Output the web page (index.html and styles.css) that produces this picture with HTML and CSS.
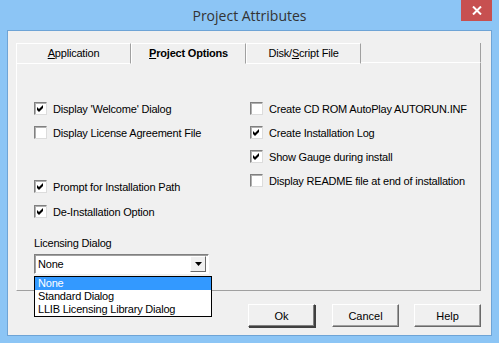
FILE: index.html
```html
<!DOCTYPE html>
<html lang="en">
<head>
    <meta charset="UTF-8">
    <title>Project Attributes</title>
    <link rel="stylesheet" href="styles.css">
</head>
<body>
    <div class="window">
        <div class="titlebar">
            <span></span>
            <div class="title">Project Attributes</div>
            <div class="close">
                <svg width="10" height="9" viewBox="0 0 10 9"><path d="M1 0.5 L9 8.5 M9 0.5 L1 8.5" stroke="#fff" stroke-width="2"/></svg>
            </div>
        </div>

        <div class="client">
            <!-- tabs -->
            <div class="tabs">
                <div class="tab"><u>A</u>pplication</div>
                <div class="tab active"><u>P</u>roject Options</div>
                <div class="tab">Disk/<u>S</u>cript File</div>
                <div class="tab-rest"></div>
            </div>

            <div class="panel">
                <div class="col col-left">
                    <label class="check checked"><span class="box"></span>Display 'Welcome' Dialog</label>
                    <label class="check"><span class="box"></span>Display License Agreement File</label>
                    <label class="check checked spaced"><span class="box"></span>Prompt for Installation Path</label>
                    <label class="check checked close-row"><span class="box"></span>De-Installation Option</label>

                    <div class="field-label">Licensing Dialog</div>
                    <div class="combo">
                        <div class="combo-value">None</div>
                        <div class="combo-btn">
                            <svg width="7" height="4" viewBox="0 0 7 4"><path d="M0 0h7l-3.5 4z" fill="#000"/></svg>
                        </div>
                        <ul class="droplist">
                            <li class="selected">None</li>
                            <li>Standard Dialog</li>
                            <li>LLIB Licensing Library Dialog</li>
                        </ul>
                    </div>
                </div>

                <div class="col col-right">
                    <label class="check"><span class="box"></span>Create CD ROM AutoPlay AUTORUN.INF</label>
                    <label class="check checked"><span class="box"></span>Create Installation Log</label>
                    <label class="check checked"><span class="box"></span>Show Gauge during install</label>
                    <label class="check"><span class="box"></span>Display README file at end of installation</label>
                </div>
            </div>

            <div class="buttons">
                <button type="button" class="btn btn-default">Ok</button>
                <button type="button" class="btn">Cancel</button>
                <button type="button" class="btn">Help</button>
            </div>
        </div>
    </div>
</body>
</html>
```

FILE: styles.css
```css
body {
    margin: 0;
    background: #8cc5f5;
    font-family: "Liberation Sans", Arial, sans-serif;
    font-size: 11px;
    letter-spacing: -0.2px;
    color: #000;
}
.window {
    width: 499px;
    height: 343px;
    display: flex;
    flex-direction: column;
}
.titlebar {
    height: 30px;
    display: grid;
    grid-template-columns: 1fr auto 1fr;
}
.title {
    font-family: "Open Sans", "Noto Sans", sans-serif;
    font-size: 14px;
    letter-spacing: 0;
    color: #333;
    line-height: 30px;
    padding-top: 1px;
}
.close {
    justify-self: end;
    width: 31px;
    height: 21px;
    margin-right: 7px;
    background: #c75050;
    display: flex;
    align-items: center;
    justify-content: center;
}
.client {
    flex: 1;
    margin: 0 7px 7px 7px;
    border: 1px solid #6ea4d6;
    background: #f0f0f0;
    padding: 12px 10px 0 8px;
}

/* tabs */
.tabs {
    display: flex;
    height: 20px;
}
.tab {
    width: 113px;
    height: 19px;
    border-top: 1px solid #fff;
    border-left: 1px solid #fff;
    border-right: 1px solid #a0a0a0;
    border-bottom: 1px solid #fff;
    text-align: center;
    line-height: 18px;
}
.tab.active {
    font-weight: bold;
    border-bottom-color: #f0f0f0;
}
.tab-rest {
    flex: 1;
    border-bottom: 1px solid #fff;
    border-right: 1px solid #a0a0a0;
}

/* panel */
.panel {
    height: 227px;
    border-left: 1px solid #fff;
    border-right: 1px solid #a0a0a0;
    border-bottom: 1px solid #a0a0a0;
    display: grid;
    grid-template-columns: 216px 1fr;
    padding-left: 17px;
}
.col {
    display: flex;
    flex-direction: column;
    gap: 11px;
    padding-top: 39px;
}
.check {
    display: flex;
    align-items: center;
    gap: 6px;
    height: 13px;
    white-space: nowrap;
}
.check.spaced {
    margin-top: 30px;
}
.check.close-row {
    margin-top: 1px;
}
.box {
    width: 11px;
    height: 11px;
    background: #fff;
    border: 1px solid;
    border-color: #808080 #dcdcdc #dcdcdc #808080;
    box-shadow: inset 1px 1px 0 #b0b0b0;
    flex: none;
}
.check.checked .box {
    background: #fff url("data:image/svg+xml,%3Csvg xmlns='http://www.w3.org/2000/svg' width='11' height='11'%3E%3Cpath d='M2 4 L4 6 L8 2 L8 5 L4 9 L2 7 Z' fill='%23000'/%3E%3C/svg%3E") no-repeat;
}
.field-label {
    margin-top: 8px;
    height: 13px;
    line-height: 13px;
}

/* combo */
.combo {
    position: relative;
    width: 173px;
    height: 18px;
    margin-top: -7px;
    background: #fff;
    border: 1px solid;
    border-color: #808080 #fff #fff #808080;
    box-shadow: inset 1px 1px 0 #a0a0a0;
    display: flex;
    align-items: center;
}
.combo-value {
    flex: 1;
    padding-left: 3px;
}
.combo-btn {
    width: 14px;
    height: 14px;
    margin-right: 2px;
    background: #f0f0f0;
    border: 1px solid;
    border-color: #fff #696969 #696969 #fff;
    display: flex;
    align-items: center;
    justify-content: center;
}
.droplist {
    position: absolute;
    top: 21px;
    left: -1px;
    width: 176px;
    margin: 0;
    padding: 0;
    list-style: none;
    background: #fff;
    border: 1px solid #000;
    z-index: 2;
}
.droplist li {
    height: 13px;
    line-height: 13px;
    padding-left: 3px;
}
.droplist li.selected {
    background: #3399ff;
    color: #fff;
}

/* buttons */
.buttons {
    display: flex;
    justify-content: flex-end;
    gap: 15px;
    margin-top: 13px;
}
.btn {
    width: 67px;
    height: 23px;
    font-family: inherit;
    font-size: 11px;
    background: #f0f0f0;
    border: 1px solid;
    border-color: #fff #696969 #696969 #fff;
    box-shadow: inset -1px -1px 0 #a0a0a0;
    padding: 0;
    color: #000;
}
.btn-default {
    margin-right: 2px;
    border-color: #fff #404040 #404040 #fff;
    box-shadow: inset -1px -1px 0 #808080, 1px 1px 0 #404040;
}
```
